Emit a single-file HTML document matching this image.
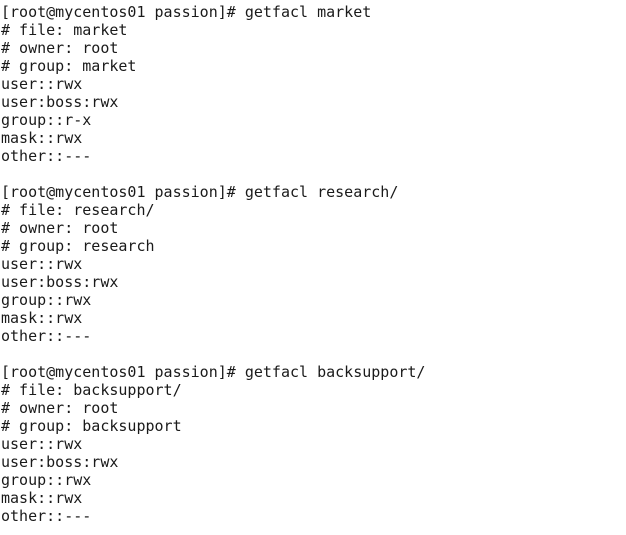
<html><head><style>
body{margin:0;background:#fff;width:626px;height:535px;overflow:hidden}
pre{margin:0;position:absolute;left:1px;top:3px;font-family:"DejaVu Sans Mono","Liberation Mono",monospace;font-size:15px;line-height:18px;color:#1a1a1a}
</style></head><body><pre>[root@mycentos01 passion]# getfacl market
# file: market
# owner: root
# group: market
user::rwx
user:boss:rwx
group::r-x
mask::rwx
other::---

[root@mycentos01 passion]# getfacl research/
# file: research/
# owner: root
# group: research
user::rwx
user:boss:rwx
group::rwx
mask::rwx
other::---

[root@mycentos01 passion]# getfacl backsupport/
# file: backsupport/
# owner: root
# group: backsupport
user::rwx
user:boss:rwx
group::rwx
mask::rwx
other::---</pre></body></html>
